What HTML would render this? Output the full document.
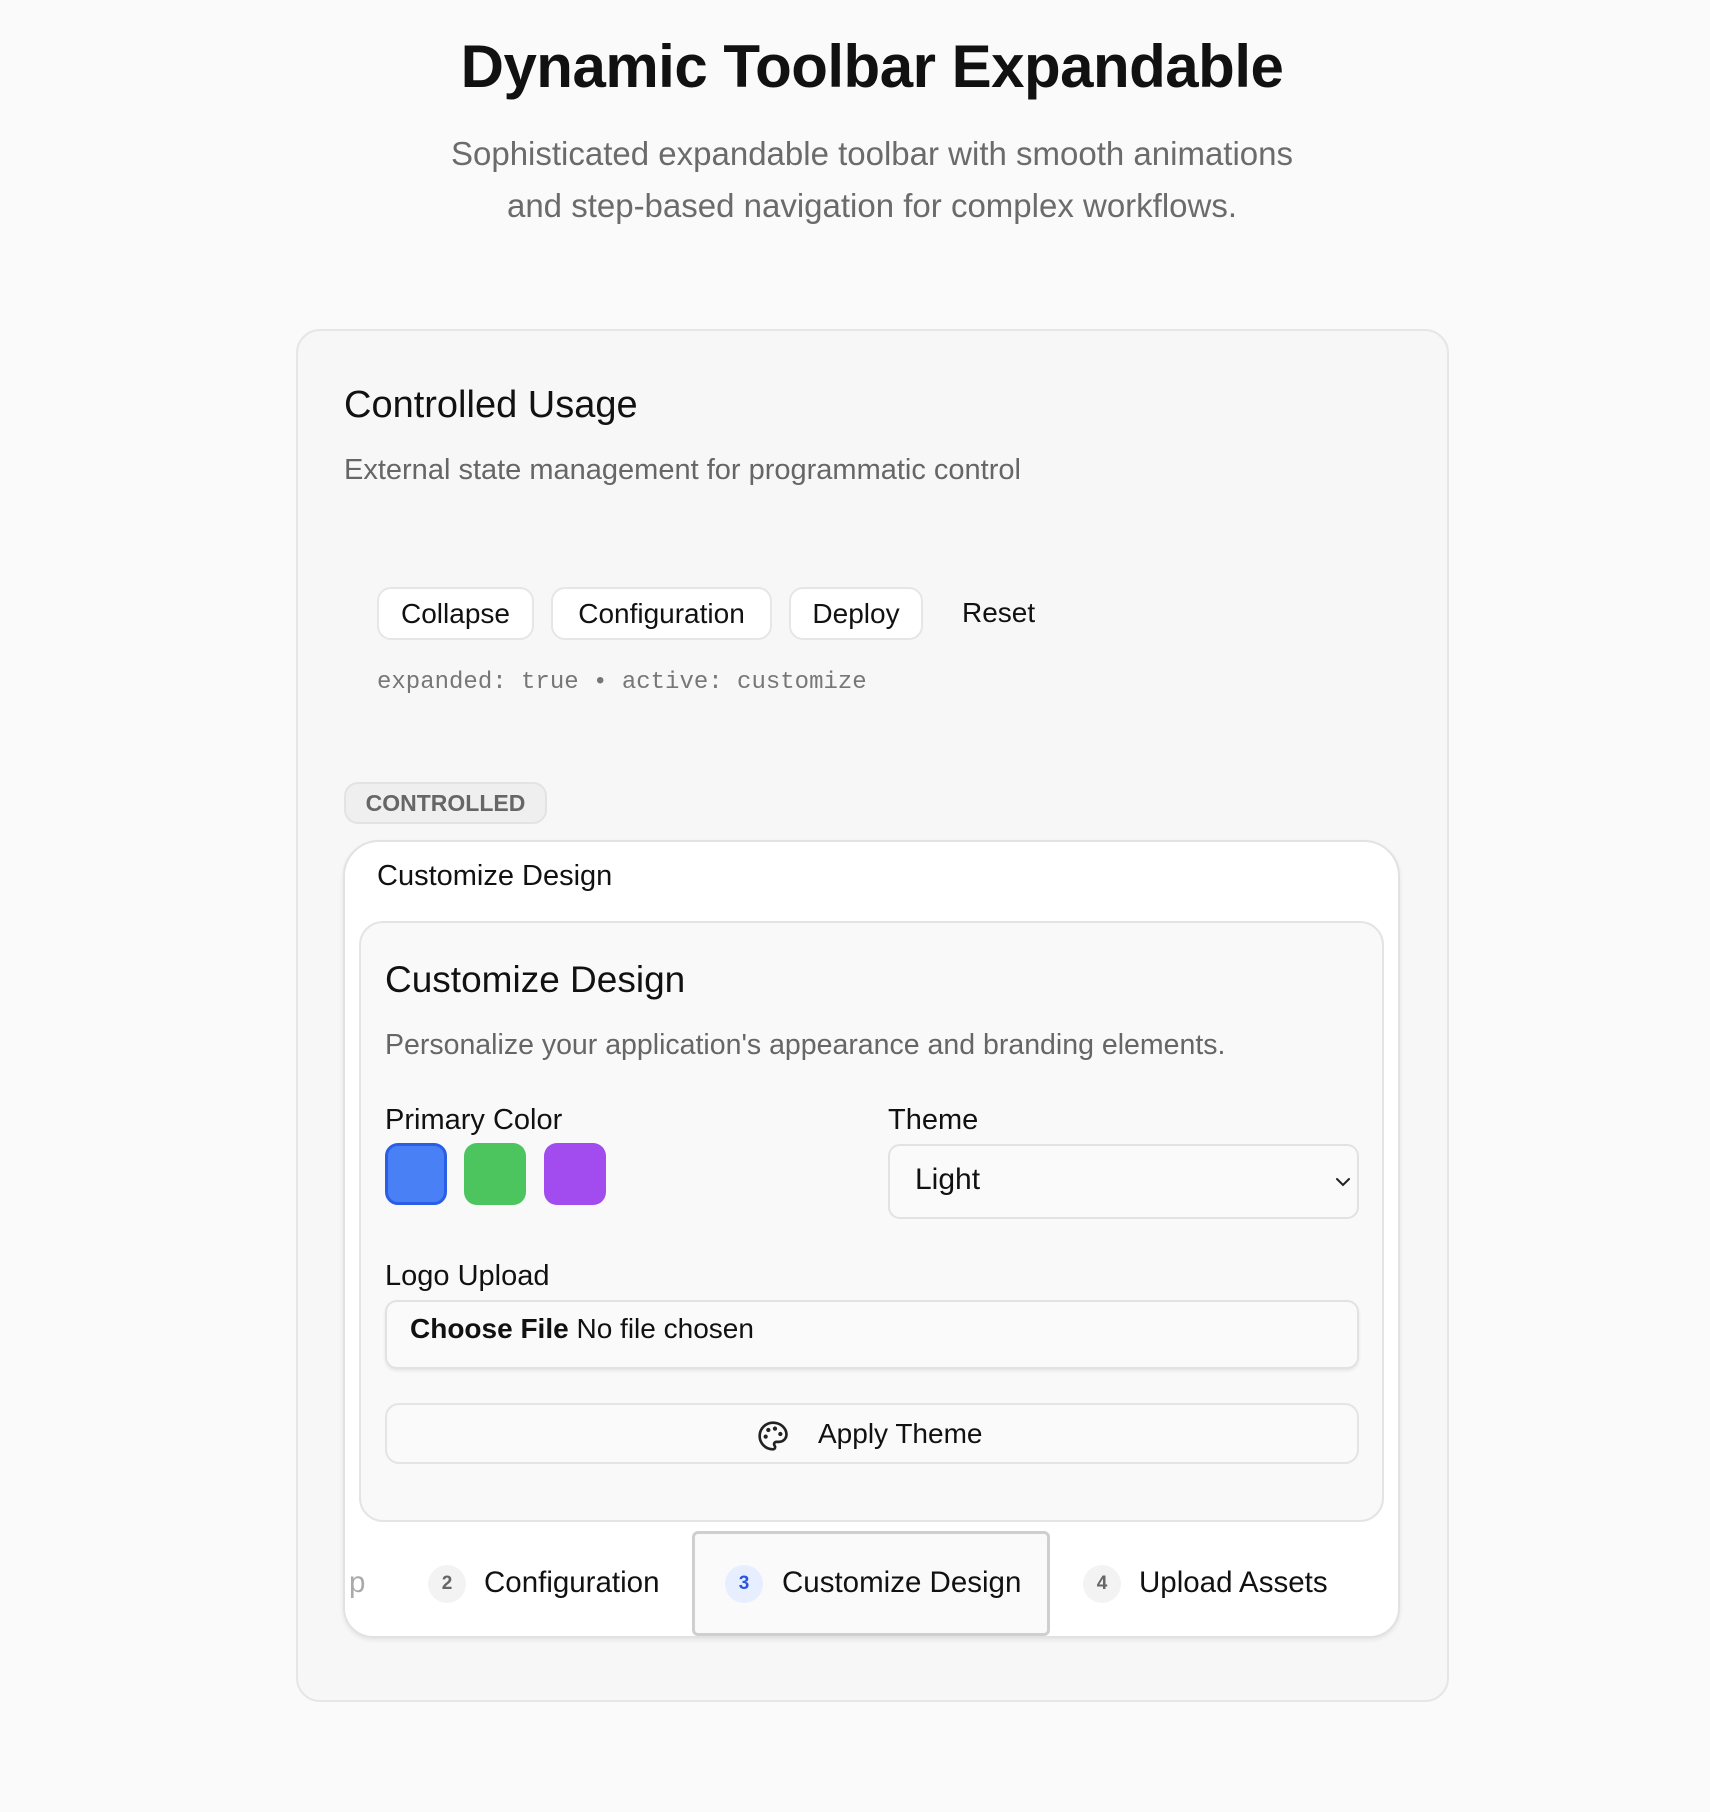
<!DOCTYPE html>
<html><head><meta charset="utf-8"><style>
*{box-sizing:border-box;margin:0;padding:0}
body{width:1710px;height:1812px;background:#fafafa;font-family:"Liberation Sans",sans-serif;color:#111;position:relative;overflow:hidden}
.a{position:absolute;white-space:nowrap}
.btn{position:absolute;top:587px;height:53px;background:#fff;border:2px solid #e6e6e6;border-radius:14px;font-size:28px;line-height:49px;text-align:center;color:#111}
.badge{position:absolute;width:38px;height:38px;border-radius:50%;background:#f3f3f3;font-size:19px;font-weight:bold;color:#666;text-align:center;line-height:38px;top:1565px}
.tab{position:absolute;font-size:29.5px;top:1566px;color:#111}
</style></head><body>
<div class="a" style="left:17px;width:1710px;text-align:center;top:32px;font-size:60px;font-weight:bold;letter-spacing:-0.5px">Dynamic Toolbar Expandable</div>
<div class="a" style="left:17px;width:1710px;text-align:center;top:128px;font-size:33px;line-height:52px;color:#6b6b6b;white-space:normal">Sophisticated expandable toolbar with smooth animations<br>and step-based navigation for complex workflows.</div>

<div class="a" style="left:296px;top:329px;width:1153px;height:1373px;background:#f7f7f7;border:2px solid #e6e6e6;border-radius:24px"></div>
<div class="a" style="left:344px;top:384px;font-size:38px">Controlled Usage</div>
<div class="a" style="left:344px;top:454px;font-size:29px;color:#666">External state management for programmatic control</div>

<div class="btn" style="left:377px;width:157px">Collapse</div>
<div class="btn" style="left:551px;width:221px">Configuration</div>
<div class="btn" style="left:789px;width:134px">Deploy</div>
<div class="a" style="left:962px;top:597px;font-size:28px">Reset</div>
<div class="a" style="left:377px;top:669px;font-family:'Liberation Mono',monospace;font-size:24px;color:#777">expanded: true • active: customize</div>

<div class="a" style="left:344px;top:782px;width:203px;height:42px;background:#efefef;border:2px solid #e3e3e3;border-radius:14px;font-size:23px;font-weight:bold;color:#666;text-align:center;line-height:38px">CONTROLLED</div>

<div class="a" style="left:343px;top:840px;width:1057px;height:798px;background:#fff;border:2px solid #e2e2e2;border-radius:36px 36px 30px 30px;box-shadow:0 2px 4px rgba(0,0,0,.08)"></div>
<div class="a" style="left:377px;top:860px;font-size:29px">Customize Design</div>

<div class="a" style="left:359px;top:921px;width:1025px;height:601px;background:#f9f9f9;border:2px solid #e4e4e4;border-radius:24px"></div>
<div class="a" style="left:385px;top:959px;font-size:37px">Customize Design</div>
<div class="a" style="left:385px;top:1029px;font-size:28.5px;color:#666">Personalize your application's appearance and branding elements.</div>
<div class="a" style="left:385px;top:1104px;font-size:29px">Primary Color</div>
<div class="a" style="left:888px;top:1104px;font-size:29px">Theme</div>
<div class="a" style="left:385px;top:1143px;width:62px;height:62px;border-radius:13px;background:#4a80f5;border:3px solid #2b5ee6"></div>
<div class="a" style="left:464px;top:1143px;width:62px;height:62px;border-radius:13px;background:#4cc55f"></div>
<div class="a" style="left:544px;top:1143px;width:62px;height:62px;border-radius:13px;background:#a24cf0"></div>
<div class="a" style="left:888px;top:1144px;width:471px;height:75px;border:2px solid #e2e2e2;border-radius:12px;background:#fafafa"></div>
<div class="a" style="left:915px;top:1163px;font-size:30px">Light</div>
<svg class="a" style="left:1333px;top:1172px" width="20" height="20" viewBox="0 0 20 20"><path d="M4 7l6 6 6-6" fill="none" stroke="#222" stroke-width="2" stroke-linecap="round"/></svg>

<div class="a" style="left:385px;top:1260px;font-size:29px">Logo Upload</div>
<div class="a" style="left:385px;top:1300px;width:974px;height:69px;border:2px solid #e2e2e2;border-radius:12px;background:#fafafa;box-shadow:0 2px 3px rgba(0,0,0,.08)"></div>
<div class="a" style="left:410px;top:1313px;font-size:28px"><b style="font-weight:600">Choose File</b> No file chosen</div>

<div class="a" style="left:385px;top:1403px;width:974px;height:61px;border:2px solid #e4e4e4;border-radius:14px;background:#fafafa"></div>
<svg class="a" style="left:757px;top:1420px" width="32" height="32" viewBox="0 0 24 24" fill="none" stroke="#222" stroke-width="2" stroke-linecap="round" stroke-linejoin="round"><circle cx="13.5" cy="6.5" r=".6" fill="#222"/><circle cx="17.5" cy="10.5" r=".6" fill="#222"/><circle cx="8.5" cy="7.5" r=".6" fill="#222"/><circle cx="6.5" cy="12.5" r=".6" fill="#222"/><path d="M12 2C6.5 2 2 6.5 2 12s4.5 10 10 10c.9 0 1.6-.7 1.6-1.7 0-.4-.2-.8-.4-1.1-.3-.3-.4-.7-.4-1.1 0-.9.7-1.7 1.7-1.7h2c3.1 0 5.6-2.5 5.6-5.6C22 6 17.5 2 12 2z"/></svg>
<div class="a" style="left:818px;top:1418px;font-size:28px">Apply Theme</div>

<div class="a" style="left:692px;top:1531px;width:358px;height:105px;border:3px solid #cfcfcf;border-radius:6px;background:#fafafa"></div>
<div class="tab" style="left:349px;color:#aaa">p</div>
<div class="badge" style="left:428px">2</div>
<div class="tab" style="left:484px">Configuration</div>
<div class="badge" style="left:725px;background:#e6eeff;color:#2a55e0">3</div>
<div class="tab" style="left:782px">Customize Design</div>
<div class="badge" style="left:1083px">4</div>
<div class="tab" style="left:1139px">Upload Assets</div>
</body></html>
